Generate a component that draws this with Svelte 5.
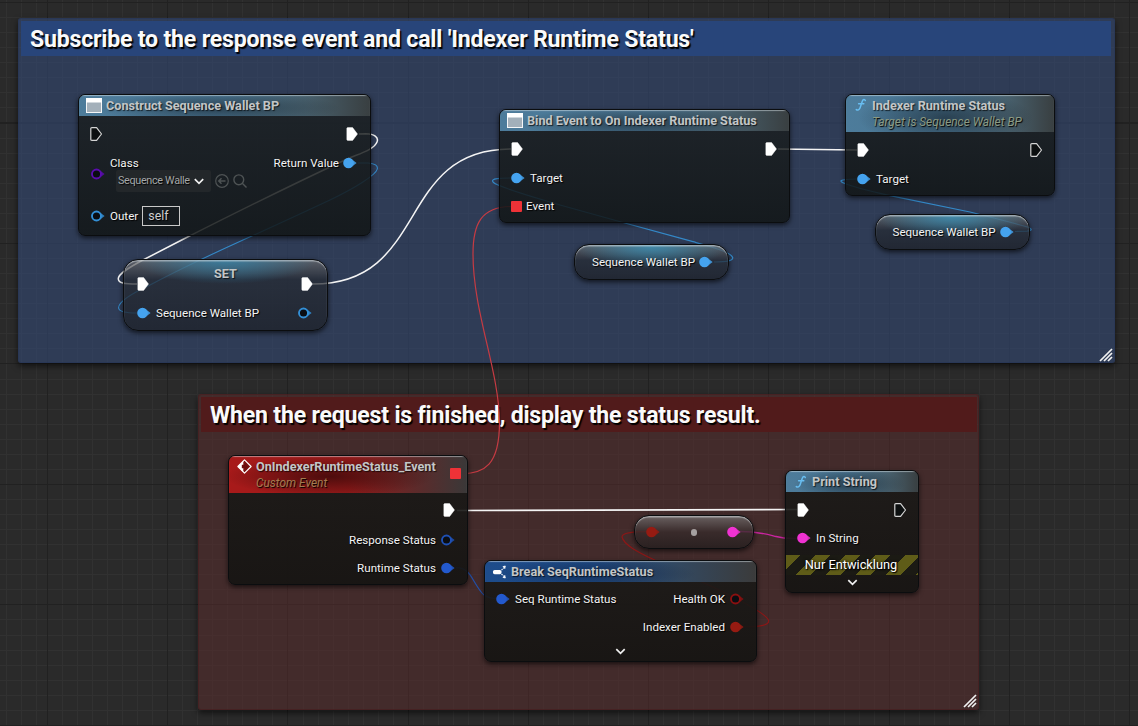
<script>
  const wires = [
    { c: '#f4f4f4', w: 1.5, d: 'M359 134 L366 133.8 C374 134 379 137 377 142 C374 150 358 154 346 159.5 C300 181 225 218 181.7 240 L143 260 C128 268 118 274 118.3 279 C118.5 283 124 284 137 284' },
    { c: '#3489c8', w: 1.1, d: 'M358 163 L368 163 C375 163.5 378 165.500 377.300 169 C376 175 355 188 330 200 C300 214 270 228 243 240 C210 255 180 269 150 285 C135 292 118 301 118.600 308 C119 312 126 313 137 313' },
    { c: '#f4f4f4', w: 1.5, d: 'M313 284 C430 284 395 149 511 149' },
    { c: '#f4f4f4', w: 1.6, d: 'M778 149 L857 150' },
    { c: '#3489c8', w: 1.2, d: 'M714 262 C728 262 733 260.500 732.700 257.500 C731 252 712 247 693 241.700 L623 222.500 L560 205 C530 196 498 187 493.500 182.500 C489 178 502 178 511 178' },
    { c: '#c63b43', w: 1.2, d: 'M462 474 C484 473 499.500 466 499.500 422 C499 370 473 312 473 254 C473 224 481 207 511 206.500' },
    { c: '#3489c8', w: 1.2, d: 'M1015 231.500 L1027 231.200 C1032 230.500 1033 229 1027 226.800 C1010 222 990 217 970 212 L890 195.700 C870 191 853 187 846 184 C838 181 838 179.500 857 179' },
    { c: '#f4f4f4', w: 1.6, d: 'M457 510.500 L797 509.500' },
    { c: '#2350a8', w: 1.2, d: 'M456 567.700 C469 568 471 577 477 586 C482 594 485 598.500 497 598.500' },
    { c: '#8c1717', w: 1.2, d: 'M743 626.700 C758 627 769 625.500 768.700 620.700 C767 614 740 600 715 588 L653 559.300 C638 552 624 545 622 537 C622 532.500 633 531.700 647 531.700' },
    { c: '#c9259f', w: 1.4, d: 'M740 531.500 C758 531.500 766 534 776 536.500 C785 539 790 538.500 797 538.500' }
  ];
</script>

{#snippet exec(on)}
  <svg class="exec" width="12" height="14" viewBox="0 0 12 14">
    <path d="M.8 1.600 Q.8 .6 1.800 .6 H6.600 L11.500 7 L6.600 13.400 H1.800 Q.8 13.400 .8 12.400Z" fill={on ? '#fff' : '#0c0f10'} stroke={on ? '#fff' : '#d4d4d4'} stroke-width={on ? 0.4 : 1.2} stroke-linejoin="round" />
  </svg>
{/snippet}

{#snippet pin(c, on)}
  <svg class="pin" width="14" height="12" viewBox="0 0 14 12">
    <path d="M10 3.200 L13.600 6 L10 8.800Z" fill={c} opacity=".85" />
    {#if on}
      <circle cx="5.500" cy="6" r="5.300" fill={c} />
    {:else}
      <circle cx="5.500" cy="6" r="4.500" fill="#0a0d12" stroke={c} stroke-width="1.900" />
    {/if}
  </svg>
{/snippet}

{#snippet panelIcon()}
  <svg class="icon" width="16" height="15" viewBox="0 0 16 15">
    <rect x=".5" y=".5" width="15" height="14" fill="#a3b0ba" stroke="#f4f6f7" />
    <rect width="16" height="4.500" fill="#fff" />
  </svg>
{/snippet}

{#snippet fnIcon()}
  <svg class="icon fn" width="12" height="14" viewBox="0 0 12 14">
    <path d="M10.300 2.600 C9.800 1 7.900 1.200 7.200 3.400 L5.100 9.800 C4.400 12 2.500 12.600 1.300 11.600 M3.600 5.800 H8.800" fill="none" stroke="#68bdf0" stroke-width="1.500" stroke-linecap="round" />
  </svg>
{/snippet}

{#snippet chevron(w)}
  <svg width={w} height="7" viewBox="0 0 10 7"><path d="M.8 1.200 L5 5.300 L9.200 1.200" fill="none" stroke="#f0f0f0" stroke-width="1.700" /></svg>
{/snippet}

{#snippet grip()}
  <svg class="grip" width="14" height="14" viewBox="0 0 14 14">
    <path d="M1 13 L13 1 M5 13 L13 5 M9 13 L13 9" stroke="#f2f2f2" stroke-width="1.700" />
  </svg>
{/snippet}

<main>
  <section class="comment blue">
    <h2>Subscribe to the response event and call 'Indexer Runtime Status'</h2>
    {@render grip()}
  </section>
  <section class="comment red">
    <h2>When the request is finished, display the status result.</h2>
    {@render grip()}
  </section>

  <svg class="wires" width="1138" height="726" viewBox="0 0 1138 726">
    {#each wires as w}
      <path d={w.d} stroke={w.c} stroke-width={w.w} fill="none" />
    {/each}
  </svg>

  <article class="node construct">
    <header class="steel">{@render panelIcon()}<h3>Construct Sequence Wallet BP</h3></header>
    <div class="row exec-row">{@render exec(false)}<i></i>{@render exec(true)}</div>
    <div class="row class-row">
      <div class="class-pin">{@render pin('#5a0cae', false)}</div>
      <div class="class-field">
        <span>Class</span>
        <div class="picker">
          <div class="select"><b>Sequence Wallet</b>{@render chevron(10)}</div>
          <svg width="14" height="14" viewBox="0 0 14 14" fill="none" stroke="#4e5354" stroke-width="1.200"><circle cx="7" cy="7" r="6.300" /><path d="M10.500 7 H4 M6.500 4.300 L3.800 7 L6.500 9.700" stroke-width="1.500" /></svg>
          <svg width="14" height="14" viewBox="0 0 14 14" fill="none" stroke="#4e5354" stroke-width="1.400"><circle cx="5.800" cy="5.800" r="4.900" /><path d="M9.300 9.300 L13.500 13.500" /></svg>
        </div>
      </div>
      <i></i>
      <div class="ret"><span>Return Value</span>{@render pin('#45a3ef', true)}</div>
    </div>
    <div class="row outer-row">{@render pin('#338fd6', false)}<span>Outer</span><div class="self">self</div></div>
  </article>

  <article class="node pill set">
    <h3>SET</h3>
    <div class="row">{@render exec(true)}<i></i>{@render exec(true)}</div>
    <div class="row">{@render pin('#45a3ef', true)}<span>Sequence Wallet BP</span><i></i>{@render pin('#338fd6', false)}</div>
  </article>

  <article class="node bind">
    <header class="steel">{@render panelIcon()}<h3>Bind Event to On Indexer Runtime Status</h3></header>
    <div class="row">{@render exec(true)}<i></i>{@render exec(true)}</div>
    <div class="row">{@render pin('#45a3ef', true)}<span>Target</span></div>
    <div class="row"><em class="delegate"></em><span>Event</span></div>
  </article>

  <article class="node pill var one"><span>Sequence Wallet BP</span>{@render pin('#45a3ef', true)}</article>

  <article class="node indexer">
    <header class="steel tall">{@render fnIcon()}<div><h3>Indexer Runtime Status</h3><p>Target is Sequence Wallet BP</p></div></header>
    <div class="row">{@render exec(true)}<i></i>{@render exec(false)}</div>
    <div class="row">{@render pin('#45a3ef', true)}<span>Target</span></div>
  </article>

  <article class="node pill var two"><span>Sequence Wallet BP</span>{@render pin('#45a3ef', true)}</article>

  <article class="node warm event">
    <header class="crimson tall">
      <svg class="icon diamond" width="15" height="15" viewBox="0 0 15 15"><path d="M7.500 .9 L14.100 7.500 L7.500 14.100 L.9 7.500Z" fill="#7a1212" stroke="#fff" stroke-width="1.200" stroke-linejoin="round" /><path d="M6.300 2 V5.800 H4.800 V9.200 H6.300 V13 L.9 7.500Z" fill="#fff" /><path d="M5 6.300 H7.600 V4 L11 7.500 L7.600 11 V8.700 H5Z" fill="#6b0e0e" /></svg>
      <div><h3>OnIndexerRuntimeStatus_Event</h3><p>Custom Event</p></div>
      <i></i><em class="delegate"></em>
    </header>
    <div class="row"><i></i>{@render exec(true)}</div>
    <div class="row"><i></i><span>Response Status</span>{@render pin('#1f50b4', false)}</div>
    <div class="row"><i></i><span>Runtime Status</span>{@render pin('#2359cd', true)}</div>
  </article>

  <article class="node warm break">
    <header class="navy">
      <svg class="icon" width="15" height="14" viewBox="0 0 15 14"><rect x="1" y="5" width="8.500" height="4.200" rx="1.600" fill="#fff" /><path d="M9.500 5.200 L11.500 3.200 M9.500 9 L11.500 11" stroke="#fff" stroke-width="1.100" stroke-dasharray="1.500 .8" /><path d="M11 1.600 L13.300 1 L12.800 3.600Z M11 12.400 L13.300 13 L12.800 10.400Z" fill="#fff" stroke="#fff" stroke-width=".8" /></svg>
      <h3>Break SeqRuntimeStatus</h3>
    </header>
    <div class="row">{@render pin('#2359cd', true)}<span>Seq Runtime Status</span><i></i><span>Health OK</span>{@render pin('#8a1010', false)}</div>
    <div class="row"><i></i><span>Indexer Enabled</span>{@render pin('#961b12', true)}</div>
    <div class="more">{@render chevron(11)}</div>
  </article>

  <article class="node pill convert">{@render pin('#961b12', true)}<s></s>{@render pin('#f032d2', true)}</article>

  <article class="node warm print">
    <header class="steel">{@render fnIcon()}<h3>Print String</h3></header>
    <div class="row">{@render exec(true)}<i></i>{@render exec(false)}</div>
    <div class="row">{@render pin('#f032d2', true)}<span>In String</span></div>
    <div class="dev">Nur Entwicklung</div>
    <div class="more">{@render chevron(11)}</div>
  </article>
</main>

<style>
  :global(body) { margin: 0; }
  main {
    position: relative; width: 1138px; height: 726px; overflow: hidden;
    font: 400 11.6px/14px Roboto, sans-serif; color: #f4f4f4;
    background:
      repeating-linear-gradient(90deg, #212121 0 1px, transparent 1px 120.24px) 47px 0,
      repeating-linear-gradient(180deg, #212121 0 1px, transparent 1px 120.5px) 0 2px,
      repeating-linear-gradient(90deg, #313131 0 1px, transparent 1px 15.03px) 47px 0,
      repeating-linear-gradient(180deg, #313131 0 1px, transparent 1px 15.06px) 0 2px,
      #2a2a2a;
  }
  h2, h3, p { margin: 0; white-space: nowrap; }
  i { flex: 1; }
  svg { display: block; flex: none; }
  .wires { position: absolute; inset: 0; }

  .comment { position: absolute; box-sizing: border-box; padding: 2px 3px 0 2px; border-radius: 3px; box-shadow: 0 3px 6px rgba(0,0,0,.6); }
  .comment h2 { height: 35px; line-height: 37px; padding-left: 9px; font-size: 23.1px; letter-spacing: -.2px; font-weight: 700; color: #fafafa; text-shadow: 1.5px 1.5px 1px #000; }
  .blue { left: 18px; top: 18px; width: 1097px; height: 345px; background: rgba(52,74,117,.6); border: 1px solid rgba(35,50,85,.5); }
  .blue h2 { background: #28457a; }
  .red { left: 198px; top: 394px; width: 781px; height: 316px; padding-right: 1px; background: rgba(92,43,44,.5); border: 1px solid rgba(72,28,30,.6); }
  .red h2 { background: #511b1b; }
  .grip { position: absolute; right: 1px; bottom: 0; }
  .red .grip { bottom: 1px; }

  .node {
    position: absolute; box-sizing: border-box; border: 1.500px solid #0b0d0f; border-radius: 7px; overflow: hidden;
    background: linear-gradient(rgba(27,31,32,.81), rgba(17,21,21,.86));
    box-shadow: 0 2px 5px rgba(0,0,0,.65);
    display: flex; flex-direction: column; text-shadow: 1px 1px 1px #000;
  }
  .warm { background: linear-gradient(rgba(27,26,24,.9), rgba(21,20,18,.92)); }
  header {
    height: 21px; flex: none; box-sizing: border-box; display: flex; align-items: center; gap: 4px; padding: 0 7px;
    box-shadow: inset 0 1.500px 1px -0.500px rgba(225,235,240,.5);
  }
  .tall { height: 37px; align-items: flex-start; padding-top: 3px; }
  h3 { font-size: 12.65px; line-height: 15px; font-weight: 700; color: #c3c6c7; text-shadow: 1px 1px 1px rgba(0,0,0,.7); }
  header > h3 { margin-top: -1px; }
  p { font-size: 11.9px; line-height: 18px; font-style: italic; color: #8b9a83; }
  .steel { background: radial-gradient(ellipse 42% 75% at 48% 62%, rgba(20,30,38,.6), transparent), linear-gradient(90deg, #4d7c9b 0, #4a7592 50%, #48606d 78%, #393f41 100%); }
  .crimson { background: radial-gradient(ellipse 44% 55% at 42% 55%, rgba(35,5,5,.65), transparent), linear-gradient(90deg, #a81a1a 0, #961a1a 50%, #5e2a2a 78%, #3a3838 100%); }
  .crimson p { color: #a57b4f; }
  .navy { background: radial-gradient(ellipse 38% 70% at 40% 60%, rgba(8,20,45,.45), transparent), linear-gradient(90deg, #1d4c8b 0, #1f4a84 40%, #33485f 72%, #3b3b3b 100%); }
  .row { height: 29px; flex: none; box-sizing: border-box; display: flex; align-items: center; padding: 0 12px; }
  .row > span, .ret span { white-space: nowrap; }
  .pin + span { margin-left: 5px; }
  span + .pin { margin-left: 5px; }
  .delegate { width: 11px; height: 11px; background: #ee3237; border-radius: 1px; flex: none; }
  .delegate + span { margin-left: 4px; }

  .construct { left: 78px; top: 94px; width: 293px; height: 142px; }
  .construct .row { padding: 0 12px; }
  .construct .exec-row { height: 37px; padding: 0 12px 2px 11px; }
  .construct .class-row { height: 40px; align-items: flex-start; }
  .class-pin { padding-top: 15px; }
  .class-field { margin-left: 5px; padding-top: 3px; }
  .picker { display: flex; align-items: center; gap: 4px; margin-left: 6px; }
  .select { width: 95px; height: 22px; box-sizing: border-box; background: #23272a; border-radius: 2px; display: flex; align-items: center; justify-content: space-between; padding: 0 7px 0 2px; color: #a3a7a8; font-size: 10.800px; letter-spacing: -.32px; }
  .select b { font-weight: 400; width: 72px; overflow: hidden; white-space: nowrap; }
  .ret { display: flex; align-items: center; height: 20px; }
  .construct .ret { margin-right: 1px; }
  .ret .pin { margin-left: 4px; }
  .construct .outer-row { height: 46px; }
  .self { margin-left: 4px; width: 38px; height: 20px; box-sizing: border-box; border: 1.500px solid #c9c9c9; line-height: 17px; padding-left: 5px; font-size: 12.4px; color: #cfcfcf; }

  .pill { border-radius: 15px; background: radial-gradient(ellipse 50% 65% at 50% 5%, rgba(56,150,190,.75), transparent), linear-gradient(rgba(110,110,112,.75), rgba(37,42,50,.72) 45%, rgba(30,34,42,.78)); box-shadow: inset 0 1.500px 1px rgba(220,225,230,.55), 0 2px 5px rgba(0,0,0,.65); }
  .set { left: 123px; top: 259px; width: 205px; height: 72px; }
  .set { background: radial-gradient(ellipse 45% 100% at 50% 0, rgba(48,135,175,.75), transparent) 0 0 / 100% 24px no-repeat, linear-gradient(rgba(110,110,112,.7), rgba(37,42,50,.72) 28%, rgba(30,34,42,.78)); }
  .set h3 { text-align: center; height: 10px; padding-top: 5px; line-height: 17px; }
  .set .row { padding: 0 15px 0 13px; }
  .set .row:nth-child(2) { height: 29px; margin-top: -6px; padding: 0 14px 0 13px; }
  .set .row:last-child { height: 30px; }

  .bind { left: 499px; top: 109px; width: 291px; height: 114px; }
  .bind .row { height: 28px; padding: 0 12px 0 11px; }
  .bind .row:nth-child(2) { height: 34px; padding-top: 2px; }
  .bind .row:nth-child(3) { height: 25px; }
  .bind .row:nth-child(4) { height: 31px; padding-top: 1px; }

  .var { flex-direction: row; align-items: center; padding-left: 17px; height: 36px; width: 155px; }
  .one { left: 574px; top: 243.5px; }
  .two { left: 874.5px; top: 213.5px; }
  .var .pin { margin-left: 4px; }

  .indexer { left: 845px; top: 94px; width: 210px; height: 102px; }
  .indexer .row { height: 23px; padding: 0 12px 0 11px; }
  .indexer .row:nth-child(2) { height: 35px; }
  .fn { margin-left: 2px; margin-right: 1px; }

  .event { left: 228px; top: 455px; width: 240px; height: 130px; }
  .event .diamond { margin-left: 1px; }
  .event .delegate { margin: 9px -1px 0 0; }
  .event .row { height: 28px; padding-right: 12px; }
  .event .row:nth-child(2) { height: 35px; padding: 0 12px 1px; }
  .event .row:nth-child(3) { height: 23px; }
  .event .row:nth-child(4) { height: 33px; }

  .break { left: 484px; top: 560px; width: 273px; height: 102px; }
  .break .row { height: 24px; padding: 0 12px 0 11px; }
  .break .row:nth-child(2) { height: 33px; }
  .more { display: flex; justify-content: center; padding-top: 9px; }

  .convert { left: 634px; top: 515px; width: 120px; height: 34px; flex-direction: row; align-items: center; justify-content: space-between; padding: 0 12px 0 11px; background: linear-gradient(rgba(115,110,110,.8), rgba(55,43,43,.8) 50%, rgba(38,31,31,.85)); }
  .convert s { width: 6px; height: 7px; border-radius: 3px; background: #a5a0a0; }

  .print { left: 785px; top: 470px; width: 134px; height: 123px; }
  .print .row { height: 24px; padding: 0 12px 0 11px; }
  .print .row:nth-child(2) { height: 34px; padding-top: 1px; }
  .dev { height: 20px; margin-top: 5px; padding-right: 2px; line-height: 20px; text-align: center; font-size: 12.800px; color: #fff; background: repeating-linear-gradient(135deg, #5f5c18 0 10.600px, #1b1a14 10.600px 21.200px); text-shadow: 1px 1px 1px #000, 0 0 3px #000; }
  .print .more { padding-top: 4px; }
</style>
